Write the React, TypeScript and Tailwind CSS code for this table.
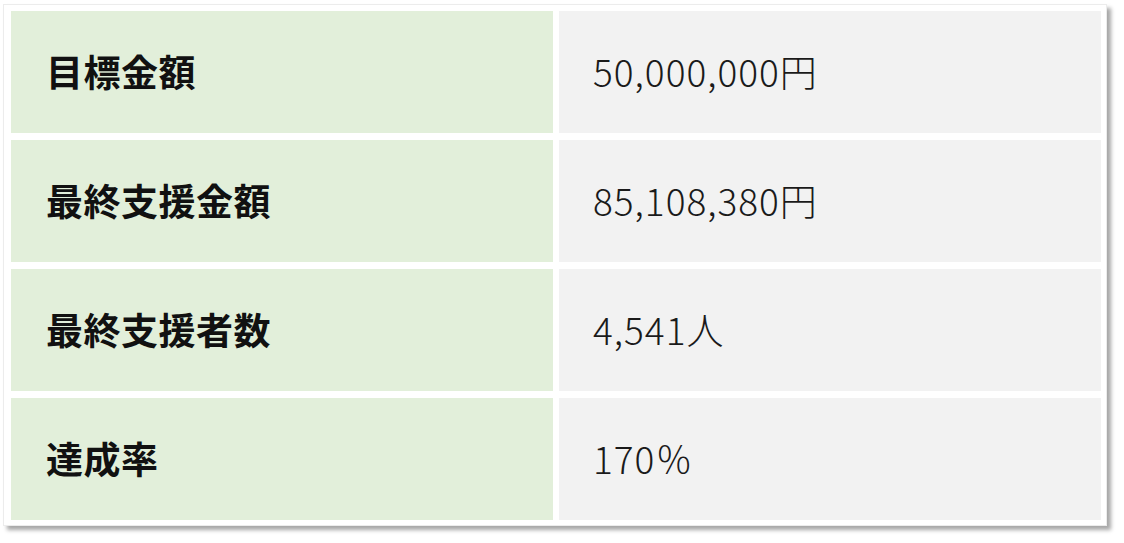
const rows = [
  { label: "目標金額", value: "50,000,000円" },
  { label: "最終支援金額", value: "85,108,380円" },
  { label: "最終支援者数", value: "4,541人" },
  { label: "達成率", value: "170％" },
];

export default function App() {
  return (
    <div className="min-h-[543px] w-[1124px] bg-white pl-[3px] pt-[4px] font-['Noto_Sans_CJK_JP','Noto_Sans',sans-serif] text-[#111]">
      <div className="w-[1104px] border border-[#ececec] bg-white pb-[5px] pl-[7px] pr-[5px] pt-[6px] shadow-[4px_4px_4px_rgba(0,0,0,0.35)]">
        <div className="grid grid-cols-[542px_542px] gap-x-[6px] gap-y-[7px]">
          {rows.map((row) => (
            <div key={row.label} className="contents">
              <div className="flex h-[122px] items-center bg-[#e2efda] pb-[2px] pl-[35px] text-[37px] font-bold leading-none tracking-[0.5px]">
                {row.label}
              </div>
              <div className="flex h-[122px] items-center bg-[#f2f2f2] pb-[2px] pl-[34px] text-[37px] font-light leading-none tracking-[1px] text-[#1a1a1a]">
                {row.value}
              </div>
            </div>
          ))}
        </div>
      </div>
    </div>
  );
}
